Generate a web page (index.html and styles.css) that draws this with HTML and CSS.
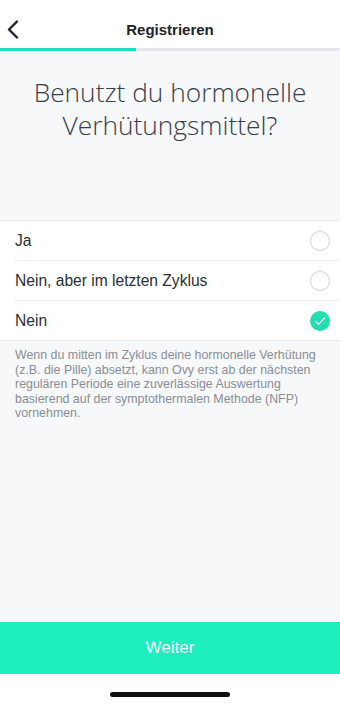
FILE: index.html
```html
<!DOCTYPE html>
<html lang="de">
<head>
  <meta charset="UTF-8">
  <meta name="viewport" content="width=device-width, initial-scale=1.0">
  <title>Registrieren</title>
  <link rel="stylesheet" href="styles.css">
</head>
<body>
  <div class="screen">
    <div class="header">
      <span class="back">
        <svg width="12" height="19" viewBox="0 0 12 19"><path d="M10 1.5L2 9.5l8 8" fill="none" stroke="#1f2229" stroke-width="2.4" stroke-linecap="round" stroke-linejoin="round"/></svg>
      </span>
      <span class="title">Registrieren</span>
    </div>
    <div class="progress"><div class="progress-fill" style="width: 40%"></div></div>

    <div class="content">
      <h1>Benutzt du hormonelle Verhütungsmittel?</h1>

      <ul class="options">
        <li class="option">
          <span>Ja</span>
          <span class="radio"></span>
        </li>
        <li class="option">
          <span>Nein, aber im letzten Zyklus</span>
          <span class="radio"></span>
        </li>
        <li class="option">
          <span>Nein</span>
          <span class="radio checked">
            <svg width="12" height="10" viewBox="0 0 12 10"><path d="M1.5 5.2l3 3L10.5 2" fill="none" stroke="#fff" stroke-width="1.4" stroke-linecap="round" stroke-linejoin="round"/></svg>
          </span>
        </li>
      </ul>

      <p class="note">Wenn du mitten im Zyklus deine hormonelle Verhütung (z.B. die Pille) absetzt, kann Ovy erst ab der nächsten regulären Periode eine zuverlässige Auswertung basierend auf der symptothermalen Methode (NFP) vornehmen.</p>
    </div>

    <button class="btn">Weiter</button>
    <div class="home"><span class="home-bar"></span></div>
  </div>
</body>
</html>
```

FILE: styles.css
```css
body {
  margin: 0;
  padding: 0;
  font-family: "Liberation Sans", Arial, sans-serif;
  color: #333a45;
  background: #fff;
}

.screen {
  width: 340px;
  height: 705px;
  display: flex;
  flex-direction: column;
  background-color: #f7f8fa;
}

.header {
  height: 38px;
  padding-top: 10px;
  display: flex;
  align-items: center;
  justify-content: center;
  position: relative;
  background: #fff;
}

.back {
  position: absolute;
  left: 7px;
  top: 20px;
  display: flex;
}

.title {
  font-size: 15px;
  font-weight: bold;
  color: #1f2229;
}

.progress {
  height: 3px;
  background-color: #e4e6ea;
}

.progress-fill {
  height: 100%;
  background-color: #22dcc0;
}

.content {
  flex: 1;
}

h1 {
  margin: 25px 0 0;
  padding: 0 30px;
  text-align: center;
  font-family: "Open Sans", sans-serif;
  font-weight: 300;
  font-size: 26.3px;
  line-height: 33px;
  color: #3a3e4c;
}

.options {
  list-style: none;
  margin: 78px 0 0;
  padding: 0 0 0 15px;
  background: #fff;
  border-top: 1px solid #e9ebee;
  border-bottom: 1px solid #e9ebee;
}

.option {
  height: 39px;
  display: flex;
  align-items: center;
  justify-content: space-between;
  padding-right: 10px;
  font-size: 15.6px;
  color: #2a2e36;
  border-bottom: 1px solid #eeeff2;
}

.option:last-child {
  border-bottom: none;
}

.radio {
  width: 18px;
  height: 18px;
  border: 1px solid #cfd1d5;
  border-radius: 50%;
  display: flex;
  align-items: center;
  justify-content: center;
}

.radio.checked {
  width: 20px;
  height: 20px;
  border: none;
  background-color: #22dfb0;
}

.note {
  margin: 7px 0 0;
  padding: 0 15px;
  font-size: 12.4px;
  line-height: 14.5px;
  color: #8a8e96;
}

.btn {
  display: block;
  width: 100%;
  height: 52px;
  border: none;
  background-color: #1eeebe;
  color: #f2fffb;
  font-family: "Liberation Sans", Arial, sans-serif;
  font-size: 17px;
}

.home {
  height: 31px;
  background: #fff;
  display: flex;
  justify-content: center;
  padding-top: 18px;
  box-sizing: border-box;
}

.home-bar {
  width: 120px;
  height: 5px;
  border-radius: 3px;
  background-color: #111;
}
```
